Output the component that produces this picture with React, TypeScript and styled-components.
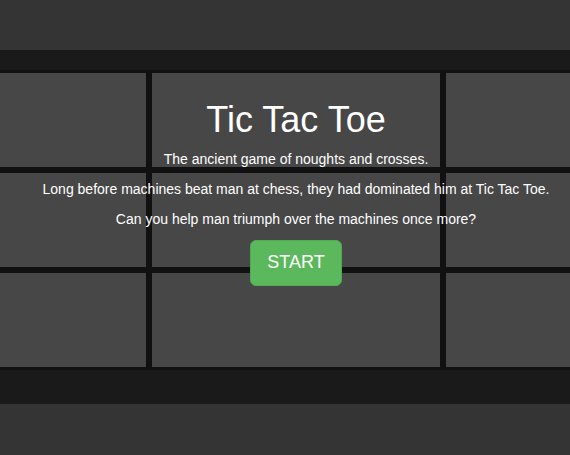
import React from 'react';
import styled, { createGlobalStyle } from 'styled-components';

const GlobalStyle = createGlobalStyle`
  html, body {
    margin: 0;
    padding: 0;
    background: #343434;
    overflow: hidden;
  }
  body {
    font-family: "Liberation Sans", Arial, Helvetica, sans-serif;
    font-size: 14px;
    line-height: 1.42857;
    color: #fff;
  }
`;

const Page = styled.div`
  width: 570px;
  height: 455px;
  overflow: hidden;
  background: #343434;
`;

const TopBar = styled.div`
  height: 50px;
`;

const Stage = styled.div`
  background: #1a1a1a;
  padding: 20px 0 34px;
`;

const BoardWrap = styled.div`
  position: relative;
  width: 592px;
`;

const Board = styled.div`
  display: grid;
  grid-template-columns: 146px 288px 146px;
  grid-template-rows: repeat(3, 94px);
  gap: 6px;
  padding: 3px 0;
  background: #111;
`;

const Cell = styled.div`
  background: #474747;
`;

const Overlay = styled.div`
  position: absolute;
  top: 30px;
  left: 0;
  right: 0;
  display: flex;
  flex-direction: column;
  align-items: center;
  text-align: center;
`;

const Title = styled.h1`
  margin: 0 0 10px;
  font-size: 36px;
  font-weight: 500;
  line-height: 1.1;
  color: #fff;
`;

const Line = styled.p`
  margin: 0 0 10px;
  white-space: nowrap;
`;

const StartButton = styled.button`
  font-family: inherit;
  font-size: 18px;
  line-height: 1.3333;
  padding: 10px 16px;
  color: #fff;
  background: #5cb85c;
  border: 1px solid #4cae4c;
  border-radius: 6px;
  cursor: pointer;
`;

const lines = [
  'The ancient game of noughts and crosses.',
  'Long before machines beat man at chess, they had dominated him at Tic Tac Toe.',
  'Can you help man triumph over the machines once more?',
];

export default function App() {
  return (
    <Page>
      <GlobalStyle />
      <TopBar />
      <Stage>
        <BoardWrap>
          <Board>
            {Array.from({ length: 9 }).map((_, i) => (
              <Cell key={i} />
            ))}
          </Board>
          <Overlay>
            <Title>Tic Tac Toe</Title>
            {lines.map((t) => (
              <Line key={t}>{t}</Line>
            ))}
            <StartButton>START</StartButton>
          </Overlay>
        </BoardWrap>
      </Stage>
    </Page>
  );
}
